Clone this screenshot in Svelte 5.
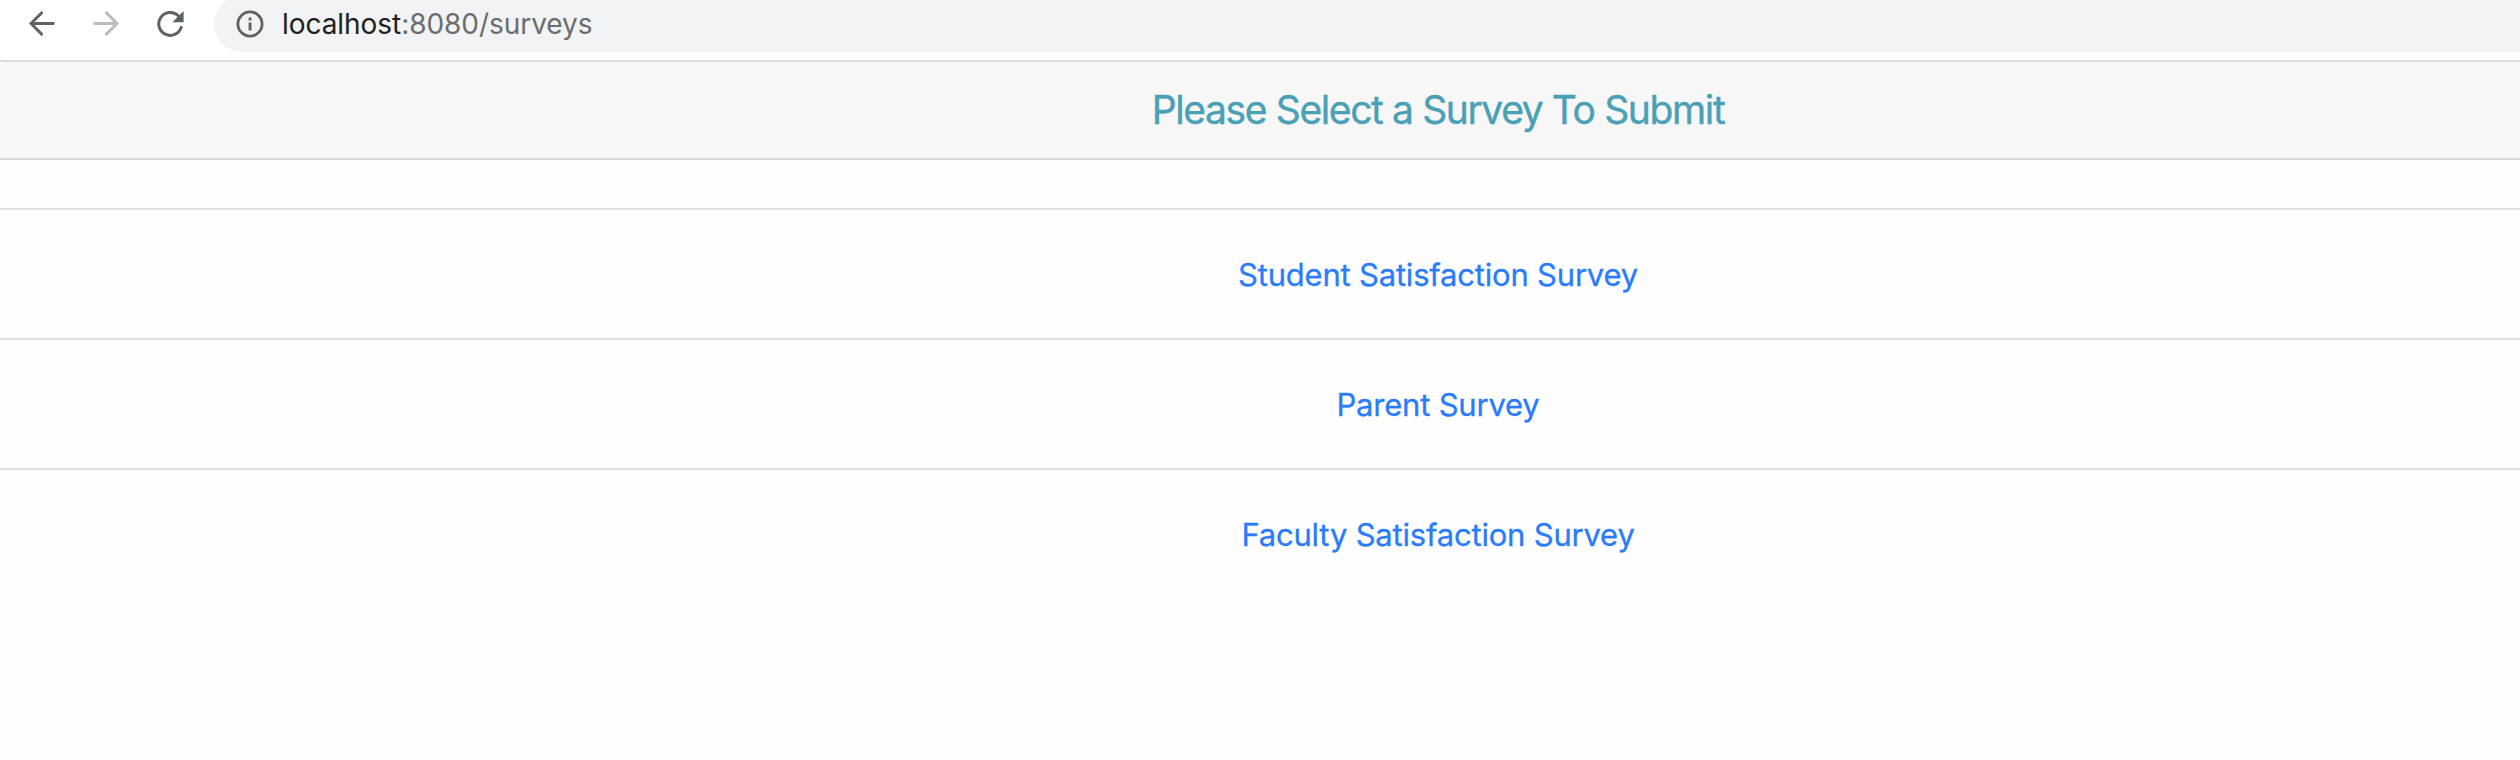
<script>
  const surveys = ['Student Satisfaction Survey', 'Parent Survey', 'Faculty Satisfaction Survey'];
</script>

<div class="window">
  <header class="toolbar">
    <nav class="controls">
      <svg width="28" height="28" viewBox="0 0 28 28" fill="none" stroke="#5f6368" stroke-width="2.9">
        <path d="M25.3 13.5H3M13.6 2.9 3 13.5l10.6 10.6" stroke-linecap="round" />
      </svg>
      <svg width="28" height="28" viewBox="0 0 28 28" fill="none" stroke="#babcbe" stroke-width="2.9">
        <path d="M2.7 13.5H25M14.4 2.9 25 13.5 14.4 24.1" stroke-linecap="round" />
      </svg>
      <svg width="28" height="28" viewBox="0 0 28 28" fill="none">
        <path d="M25.2 17.4A11.5 11.5 0 1 1 22.2 5.6" stroke="#5f6368" stroke-width="3" stroke-linecap="round" />
        <path d="M27.6 1v11.3H16.3z" fill="#5f6368" />
      </svg>
    </nav>
    <div class="address">
      <svg width="28" height="28" viewBox="0 0 28 28" fill="none">
        <circle cx="14" cy="14" r="12.1" stroke="#5f6368" stroke-width="2.8" />
        <path d="M12.6 7.6h2.9v2.9h-2.9zM12.6 12.6h2.9v8h-2.9z" fill="#5f6368" />
      </svg>
      <span class="url"><span class="host">localhost</span>:8080/surveys</span>
    </div>
  </header>
  <main class="page">
    <h1>Please Select a Survey To Submit</h1>
    <ul>
      {#each surveys as survey}
        <li><a href="#survey">{survey}</a></li>
      {/each}
    </ul>
  </main>
</div>

<style>
  :global(body) {
    margin: 0;
    background: #fff;
  }
  .window {
    width: 100%;
    height: 760px;
    overflow: hidden;
    background: #fefefe;
    font-family: Inter, 'Liberation Sans', sans-serif;
  }
  .toolbar {
    box-sizing: border-box;
    display: flex;
    height: 62px;
    background: #fff;
    border-bottom: 2px solid #dadae1;
  }
  .controls {
    display: flex;
    gap: 36px;
    padding: 10px 30px 0 28px;
  }
  svg {
    display: block;
    flex: none;
  }
  .address {
    box-sizing: border-box;
    display: flex;
    align-items: center;
    flex: 1;
    gap: 18px;
    height: 56px;
    margin-top: -4px;
    padding-left: 22px;
    border-radius: 28px 0 0 28px;
    background: #f1f3f4;
  }
  .url {
    font-size: 28px;
    line-height: 34px;
    letter-spacing: -0.05px;
    color: #6b6d70;
    white-space: nowrap;
  }
  .host {
    color: #202124;
  }
  .page {
    width: 2876px;
  }
  h1 {
    box-sizing: border-box;
    height: 98px;
    margin: 0;
    border-bottom: 2px solid #d8d8d8;
    border-radius: 6px 0 0 0;
    background: #f7f7f7;
    color: #4aa1b5;
    font-size: 39px;
    font-weight: 400;
    line-height: 96px;
    letter-spacing: -1.38px;
    text-align: center;
    -webkit-text-stroke: 0.4px #4aa1b5;
  }
  ul {
    margin: 48px 0 0;
    padding: 0;
    list-style: none;
  }
  li {
    box-sizing: border-box;
    height: 130px;
    border-top: 2px solid #dee2e6;
    line-height: 129px;
    text-align: center;
  }
  a {
    color: #2a7cfb;
    font-size: 31px;
    letter-spacing: -0.2px;
    text-decoration: none;
    -webkit-text-stroke: 0.3px #2a7cfb;
  }
</style>
